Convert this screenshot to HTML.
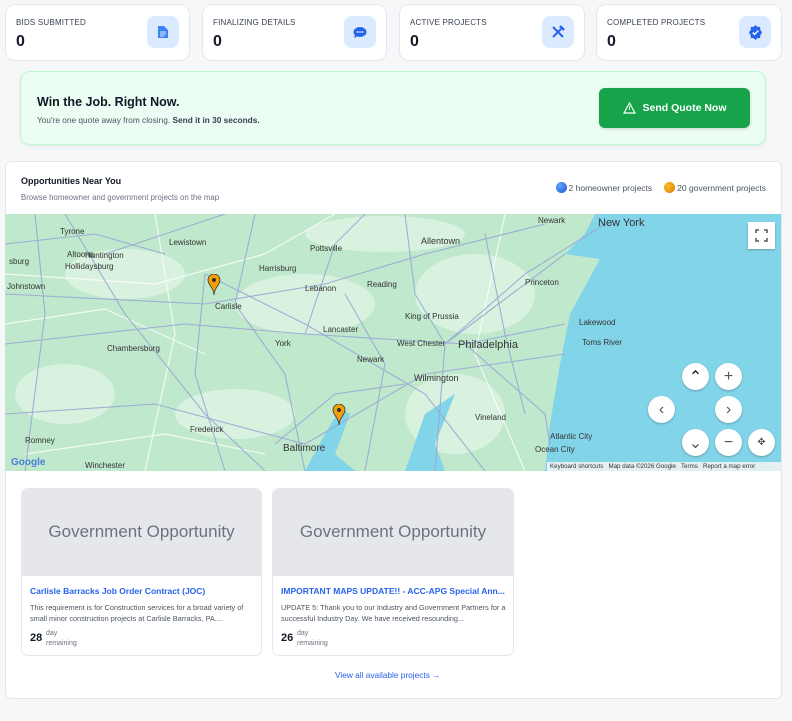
<!DOCTYPE html>
<html><head><meta charset="utf-8"><style>
*{box-sizing:border-box;margin:0;padding:0}
body{width:792px;height:721px;background:#f6f7f9;font-family:"Liberation Sans",sans-serif;position:relative;overflow:hidden;color:#111827}
.abs{position:absolute}
.stat{position:absolute;top:4px;height:57px;background:#fff;border:1px solid #e5e7eb;border-radius:10px}
.stat .l{position:absolute;left:10px;top:13px;font-size:8px;color:#374151;letter-spacing:.2px}
.stat .v{position:absolute;left:10px;top:28px;font-size:16px;font-weight:bold;color:#111827}
.stat .ic{position:absolute;right:10px;top:11px;width:32px;height:32px;border-radius:8px;background:#dbeafe;display:flex;align-items:center;justify-content:center}
.card{position:absolute;top:488px;height:168px;background:#fff;border:1px solid #e5e7eb;border-radius:7px;overflow:hidden}
.card .img{height:87px;background:#e5e7eb;color:#6b7280;font-size:17px;text-align:center;line-height:86px}
.card .t{position:absolute;left:8px;top:97px;font-size:8.5px;font-weight:bold;color:#2563eb;white-space:nowrap}
.card .d{position:absolute;left:8px;top:113px;width:232px;font-size:7.3px;line-height:11px;color:#4b5563}
.card .n{position:absolute;left:8px;top:143px;font-size:11px;font-weight:bold}
.card .s{position:absolute;left:24px;top:140px;font-size:7px;line-height:10px;color:#6b7280}
.mc{position:absolute;width:27px;height:27px;border-radius:50%;background:#fff;box-shadow:0 1px 2px rgba(0,0,0,.25);display:flex;align-items:center;justify-content:center}
.city{position:absolute;font-size:8px;color:#333}
</style></head><body>

<div class="stat" style="left:5px;width:185px"><div class="l">BIDS SUBMITTED</div><div class="v">0</div><div class="ic"><svg width="12" height="14" viewBox="0 0 12 14"><path d="M1 1h6l4 4v8H1z" fill="#3b82f6"/><path d="M3 7h6M3 9h6M3 11h4" stroke="#dbeafe" stroke-width="1"/></svg></div></div>
<div class="stat" style="left:202px;width:185px"><div class="l">FINALIZING DETAILS</div><div class="v">0</div><div class="ic"><svg width="14" height="13" viewBox="0 0 14 13"><ellipse cx="7" cy="6" rx="6.5" ry="5" fill="#2563eb"/><path d="M2 9l-1 3 4-2z" fill="#2563eb"/><circle cx="4.5" cy="6" r=".9" fill="#fff"/><circle cx="7" cy="6" r=".9" fill="#fff"/><circle cx="9.5" cy="6" r=".9" fill="#fff"/></svg></div></div>
<div class="stat" style="left:399px;width:186px"><div class="l">ACTIVE PROJECTS</div><div class="v">0</div><div class="ic"><svg width="14" height="14" viewBox="0 0 14 14" stroke="#2563eb" stroke-width="2" fill="none"><path d="M2 12L10 4M2 2l10 10"/><path d="M9 1l4 4" stroke-width="2.5"/></svg></div></div>
<div class="stat" style="left:596px;width:186px"><div class="l">COMPLETED PROJECTS</div><div class="v">0</div><div class="ic"><svg width="15" height="15" viewBox="0 0 16 16"><path d="M8 0l2 2 3 0 0 3 2 3-2 3 0 3-3 0-2 2-2-2-3 0 0-3-2-3 2-3 0-3 3 0z" fill="#2563eb"/><path d="M5 8l2 2 4-4" stroke="#fff" stroke-width="1.6" fill="none"/></svg></div></div>

<div class="abs" style="left:20px;top:71px;width:746px;height:74px;background:#ecfdf3;border:1px solid #bbf7d0;border-radius:10px;box-shadow:0 2px 4px rgba(0,0,0,.06)">
<div class="abs" style="left:16px;top:23px;font-size:12.5px;font-weight:bold">Win the Job. Right Now.</div>
<div class="abs" style="left:16px;top:43px;font-size:8.3px;color:#4b5563">You're one quote away from closing. <b style="color:#374151">Send it in 30 seconds.</b></div>
<div class="abs" style="left:578px;top:16px;width:151px;height:40px;background:#16a34a;border-radius:6px;color:#fff;font-size:10.5px;font-weight:bold;display:flex;align-items:center;justify-content:center;gap:7px;box-shadow:0 1px 3px rgba(0,0,0,.15)"><svg width="13" height="12" viewBox="0 0 13 12"><path d="M6.5 1L12 11H1z" stroke="#fff" fill="none" stroke-width="1.2"/><path d="M6.5 4v4" stroke="#fff"/></svg>Send Quote Now</div>
</div>

<div class="abs" style="left:5px;top:161px;width:777px;height:538px;background:#fff;border:1px solid #e5e7eb;border-radius:6px"></div>
<div class="abs" style="left:21px;top:176px;font-size:9px;font-weight:bold">Opportunities Near You</div>
<div class="abs" style="left:21px;top:193px;font-size:7.8px;color:#6b7280">Browse homeowner and government projects on the map</div>
<div class="abs" style="right:26px;top:182px;font-size:8.5px;color:#4b5563;display:flex;align-items:center;gap:2px"><span style="width:11px;height:11px;border-radius:50%;background:radial-gradient(circle at 35% 35%,#60a5fa,#1d4ed8);display:inline-block"></span>2 homeowner projects<span style="width:11px;height:11px;border-radius:50%;background:radial-gradient(circle at 35% 35%,#fbbf24,#d97706);display:inline-block;margin-left:10px"></span>20 government projects</div>

<div class="abs" style="left:5px;top:214px;width:776px;height:257px;overflow:hidden;background:#bfe8cc">
<svg width="776" height="257" class="abs" style="left:0;top:0">
<g fill="#d8f2df"><ellipse cx="120" cy="60" rx="60" ry="25"/><ellipse cx="300" cy="90" rx="70" ry="30"/><ellipse cx="470" cy="80" rx="60" ry="40"/><ellipse cx="60" cy="180" rx="50" ry="30"/><ellipse cx="230" cy="200" rx="60" ry="25"/><ellipse cx="450" cy="200" rx="50" ry="40"/><ellipse cx="380" cy="20" rx="80" ry="18"/></g>
<path d="M590 0 L776 0 L776 257 L540 257 L545 210 L555 150 L565 100 L595 45 L560 40 L580 20 Z" fill="#82d4e8"/>
<path d="M300 257 L320 220 L335 195 L345 200 L330 240 L350 257Z" fill="#82d4e8"/>
<path d="M400 257 L420 200 L450 180 L430 230 L440 257Z" fill="#82d4e8"/>
<g stroke="#fff" stroke-width="1.2" fill="none" opacity=".8">
<path d="M0 60 L150 70 L260 40 L330 0"/><path d="M20 240 L160 220 L260 240"/><path d="M150 0 L170 120 L140 257"/><path d="M500 0 L470 140 L520 257"/><path d="M0 110 L100 95 L200 140"/>
</g>
<g stroke="#9aa7d6" stroke-width="1.1" fill="none" opacity=".9">
<path d="M0 80 L200 90 L320 70 L420 40 L540 10"/><path d="M0 130 L180 110 L300 120 L460 130 L560 110"/>
<path d="M60 0 L120 100 L200 200 L260 257"/><path d="M250 0 L230 90 L280 160 L300 257"/>
<path d="M400 0 L410 80 L440 130 L430 257"/><path d="M200 60 L300 110 L420 180 L480 257"/>
<path d="M0 200 L150 190 L300 230 L420 160 L560 140"/><path d="M440 130 L520 60 L600 10"/>
<path d="M100 40 L220 0"/><path d="M480 20 L500 120 L520 200"/><path d="M340 80 L380 150 L360 257"/>
<path d="M0 30 L90 20 L160 40"/><path d="M30 0 L40 100 L20 257"/><path d="M200 60 L190 160 L220 257"/><path d="M300 120 L330 30 L360 0"/>
<path d="M440 130 L560 40"/><path d="M460 130 L540 200 L545 230"/><path d="M270 230 L330 180 L400 170"/>
</g>
</svg>
<div class="city" style="left:533px;top:2px">Newark</div><div class="city" style="left:593px;top:3px;font-size:11px">New York</div>
<div class="city" style="left:416px;top:22px;font-size:9px">Allentown</div><div class="city" style="left:453px;top:125px;font-size:11px">Philadelphia</div>
<div class="city" style="left:409px;top:159px;font-size:9px">Wilmington</div><div class="city" style="left:278px;top:229px;font-size:10px">Baltimore</div>
<div class="city" style="left:80px;top:37px">Huntington</div><div class="city" style="left:254px;top:50px">Harrisburg</div>
<div class="city" style="left:102px;top:130px">Chambersburg</div><div class="city" style="left:318px;top:111px">Lancaster</div>
<div class="city" style="left:520px;top:64px">Princeton</div><div class="city" style="left:574px;top:104px">Lakewood</div>
<div class="city" style="left:577px;top:124px">Toms River</div><div class="city" style="left:545px;top:218px">Atlantic City</div>
<div class="city" style="left:530px;top:231px">Ocean City</div><div class="city" style="left:470px;top:199px">Vineland</div>
<div class="city" style="left:185px;top:211px">Frederick</div><div class="city" style="left:80px;top:247px">Winchester</div>
<div class="city" style="left:55px;top:13px">Tyrone</div><div class="city" style="left:164px;top:24px">Lewistown</div><div class="city" style="left:62px;top:36px">Altoona</div><div class="city" style="left:60px;top:48px">Hollidaysburg</div><div class="city" style="left:2px;top:68px">Johnstown</div><div class="city" style="left:210px;top:88px">Carlisle</div><div class="city" style="left:270px;top:125px">York</div><div class="city" style="left:305px;top:30px">Pottsville</div><div class="city" style="left:300px;top:70px">Lebanon</div><div class="city" style="left:362px;top:66px">Reading</div><div class="city" style="left:400px;top:98px">King of Prussia</div><div class="city" style="left:392px;top:125px">West Chester</div><div class="city" style="left:352px;top:141px">Newark</div><div class="city" style="left:20px;top:222px">Romney</div><div class="city" style="left:4px;top:43px">sburg</div>
<div class="city" style="left:6px;top:243px;font-size:10px;color:#4a7fd8;font-weight:bold">Google</div>
<svg class="abs" style="left:202px;top:60px" width="14" height="22" viewBox="0 0 14 22"><path d="M7 21C7 14 13 11 13 6A6 6 0 0 0 1 6C1 11 7 14 7 21z" fill="#f59e0b" stroke="#333" stroke-width=".8"/><circle cx="7" cy="6" r="2" fill="#333"/></svg>
<svg class="abs" style="left:327px;top:190px" width="14" height="22" viewBox="0 0 14 22"><path d="M7 21C7 14 13 11 13 6A6 6 0 0 0 1 6C1 11 7 14 7 21z" fill="#f59e0b" stroke="#333" stroke-width=".8"/><circle cx="7" cy="6" r="2" fill="#333"/></svg>
<div class="abs" style="left:743px;top:8px;width:27px;height:27px;background:#fff;box-shadow:0 1px 2px rgba(0,0,0,.25)"><svg width="27" height="27"><path d="M8 11V8h3M16 8h3v3M19 16v3h-3M11 19H8v-3" stroke="#555" stroke-width="1.5" fill="none"/></svg></div>
<div class="mc" style="left:677px;top:149px">⌃</div><div class="mc" style="left:710px;top:149px;font-size:16px;color:#555">+</div>
<div class="mc" style="left:643px;top:182px;color:#555">‹</div><div class="mc" style="left:710px;top:182px;color:#555">›</div>
<div class="mc" style="left:677px;top:215px;color:#555">⌄</div><div class="mc" style="left:710px;top:215px;color:#555">−</div><div class="mc" style="left:743px;top:215px;color:#555;font-size:10px">✥</div>
<div class="abs" style="left:542px;top:248px;width:234px;height:9px;background:rgba(245,245,245,.85);font-size:6.2px;color:#333;line-height:9px;padding-left:3px;white-space:nowrap">Keyboard shortcuts &nbsp; Map data ©2026 Google &nbsp; Terms &nbsp; Report a map error</div>
</div>

<div class="card" style="left:21px;width:241px"><div class="img">Government Opportunity</div><div class="t">Carlisle Barracks Job Order Contract (JOC)</div><div class="d">This requirement is for Construction services for a broad variety of small minor construction projects at Carlisle Barracks, PA....</div><div class="n">28</div><div class="s">day<br>remaining</div></div>
<div class="card" style="left:272px;width:242px"><div class="img">Government Opportunity</div><div class="t">IMPORTANT MAPS UPDATE!! - ACC-APG Special Ann...</div><div class="d">UPDATE 5: Thank you to our Industry and Government Partners for a successful Industry Day. We have received resounding...</div><div class="n">26</div><div class="s">day<br>remaining</div></div>

<div class="abs" style="left:335px;top:670px;font-size:8.3px;color:#2563eb">View all available projects →</div>
</body></html>
